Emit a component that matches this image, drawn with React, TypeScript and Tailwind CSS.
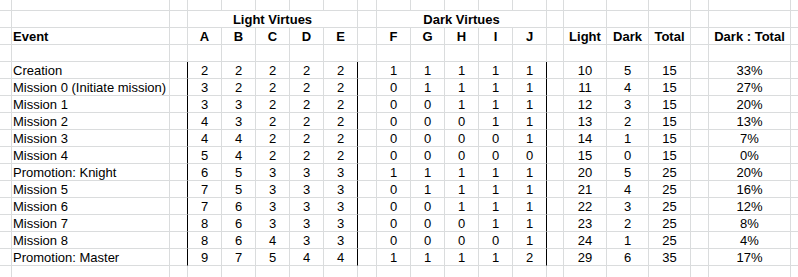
import React from "react"

type Cell = {
  w: string
  text?: string | number
  align?: "left" | "center"
  bold?: boolean
  black?: boolean
}

// column widths, each including its 1px right gridline
const W = [
  "w-[12px]", // 0 margin
  "w-[158px]", // Event
  "w-[18px]", // gap
  "w-[34px]", "w-[34px]", "w-[34px]", "w-[34px]", "w-[34px]", // A-E
  "w-[19px]", // gap
  "w-[34px]", "w-[34px]", "w-[34px]", "w-[34px]", "w-[34px]", // F-J
  "w-[17px]", // gap
  "w-[43px]", // Light
  "w-[42px]", // Dark
  "w-[42px]", // Total
  "w-[18px]", // gap
  "w-[82px]", // Dark : Total
  "w-[80px]", // spill
]

const rows: (string | number)[][] = [
  ["Creation", 2, 2, 2, 2, 2, 1, 1, 1, 1, 1, 10, 5, 15, "33%"],
  ["Mission 0 (Initiate mission)", 3, 2, 2, 2, 2, 0, 1, 1, 1, 1, 11, 4, 15, "27%"],
  ["Mission 1", 3, 3, 2, 2, 2, 0, 0, 1, 1, 1, 12, 3, 15, "20%"],
  ["Mission 2", 4, 3, 2, 2, 2, 0, 0, 0, 1, 1, 13, 2, 15, "13%"],
  ["Mission 3", 4, 4, 2, 2, 2, 0, 0, 0, 0, 1, 14, 1, 15, "7%"],
  ["Mission 4", 5, 4, 2, 2, 2, 0, 0, 0, 0, 0, 15, 0, 15, "0%"],
  ["Promotion: Knight", 6, 5, 3, 3, 3, 1, 1, 1, 1, 1, 20, 5, 25, "20%"],
  ["Mission 5", 7, 5, 3, 3, 3, 0, 1, 1, 1, 1, 21, 4, 25, "16%"],
  ["Mission 6", 7, 6, 3, 3, 3, 0, 0, 1, 1, 1, 22, 3, 25, "12%"],
  ["Mission 7", 8, 6, 3, 3, 3, 0, 0, 0, 1, 1, 23, 2, 25, "8%"],
  ["Mission 8", 8, 6, 4, 3, 3, 0, 0, 0, 0, 1, 24, 1, 25, "4%"],
  ["Promotion: Master", 9, 7, 5, 4, 4, 1, 1, 1, 1, 2, 29, 6, 35, "17%"],
]

const blankRow = (): Cell[] => W.map((w) => ({ w }))

function dataRow(r: (string | number)[]): Cell[] {
  const [ev, a, b, c, d, e, f, g, h, i, j, light, dark, total, pct] = r
  const vals = [undefined, ev, undefined, a, b, c, d, e, undefined, f, g, h, i, j, undefined, light, dark, total, undefined, pct, undefined]
  return W.map((w, k) => ({
    w,
    text: vals[k],
    align: k === 1 ? "left" : "center",
    black: k === 2 || k === 7 || k === 13,
  }))
}

const groupRow: Cell[] = [
  { w: W[0] },
  { w: W[1] },
  { w: W[2] },
  { w: "w-[170px]", text: "Light Virtues", align: "center", bold: true },
  { w: W[8] },
  { w: "w-[170px]", text: "Dark Virtues", align: "center", bold: true },
  ...W.slice(14).map((w) => ({ w })),
]

const headLabels = ["", "Event", "", "A", "B", "C", "D", "E", "", "F", "G", "H", "I", "J", "", "Light", "Dark", "Total", "", "Dark : Total", ""]
const headRow: Cell[] = W.map((w, k) => ({
  w,
  text: headLabels[k],
  align: k === 1 ? "left" : "center",
  bold: true,
}))

function Row({ cells, h }: { cells: Cell[]; h: string }) {
  return (
    <div className="flex">
      {cells.map((c, k) => (
        <div
          key={k}
          className={`${c.w} ${h} shrink-0 overflow-visible whitespace-nowrap border-b border-r border-b-[#dadcdd] pt-px leading-[15px] ${
            c.black ? "border-r-black" : "border-r-[#dadcdd]"
          } ${c.align === "left" ? "pl-px text-left" : "text-center"} ${c.bold ? "font-bold" : ""}`}
        >
          {c.text}
        </div>
      ))}
    </div>
  )
}

export default function App() {
  return (
    <div className="h-[277px] w-[798px] overflow-hidden bg-white text-[13px] text-black font-['Liberation_Sans',Arial,sans-serif]">
      <Row cells={blankRow()} h="h-[11px]" />
      <Row cells={groupRow} h="h-[17px]" />
      <Row cells={headRow} h="h-[17px]" />
      <Row cells={blankRow()} h="h-[17px]" />
      {rows.map((r, k) => (
        <Row key={k} cells={dataRow(r)} h="h-[17px]" />
      ))}
      <Row cells={blankRow()} h="h-[17px]" />
    </div>
  )
}
